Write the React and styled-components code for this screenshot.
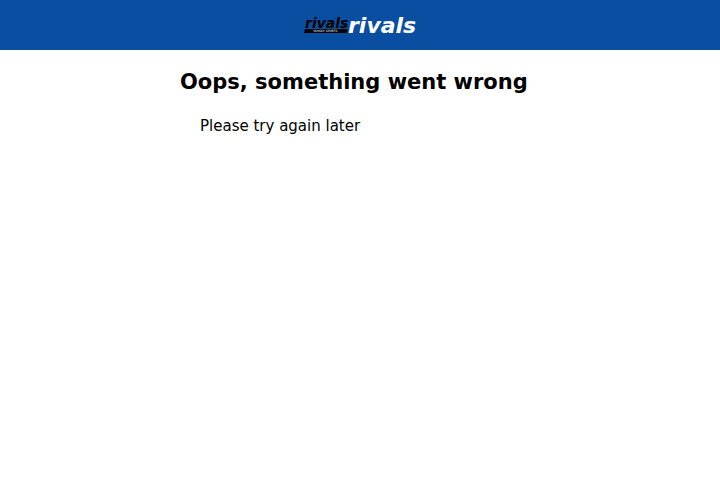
import React from "react";
import styled, { createGlobalStyle } from "styled-components";

const GlobalStyle = createGlobalStyle`
  body {
    margin: 0;
    background: #fff;
    color: #000;
    font-family: "DejaVu Sans", sans-serif;
  }
`;

const Header = styled.header`
  display: flex;
  justify-content: center;
  align-items: center;
  height: 50px;
  background: #0a4ea2;
`;

const Brand = styled.a`
  display: flex;
  text-decoration: none;
`;

const Logo = styled.svg`
  display: block;
  font-family: "DejaVu Sans", sans-serif;
  font-weight: bold;
`;

const Wordmark = styled.text`
  font-size: ${(p) => p.$size}px;
  font-style: italic;
  fill: ${(p) => p.$color};
`;

const Tagline = styled.text`
  font-size: 3px;
  font-weight: normal;
  fill: #fff;
`;

const Content = styled.main`
  width: 50%;
  margin: 0 auto;
`;

const Title = styled.h1`
  margin: 20px 0;
  font-size: 21px;
  line-height: 24px;
  white-space: nowrap;
`;

const Message = styled.p`
  margin: 0 20px;
  font-size: 15px;
  line-height: 24px;
`;

export default function App() {
  return (
    <>
      <GlobalStyle />
      <Header>
        <Brand href="#" aria-label="Rivals home">
          <Logo width="112" height="18" viewBox="0 0 112 18" overflow="visible">
            <Wordmark x="1" y="12" $size={14} $color="#000">rivals</Wordmark>
            <path d="M1 13H44L43 17H0Z" fill="#000" />
            <Tagline x="9" y="16">YAHOO! SPORTS</Tagline>
            <Wordmark x="44" y="17" $size={22} $color="#fff">rivals</Wordmark>
          </Logo>
        </Brand>
      </Header>
      <Content>
        <Title>Oops, something went wrong</Title>
        <Message>Please try again later</Message>
      </Content>
    </>
  );
}
